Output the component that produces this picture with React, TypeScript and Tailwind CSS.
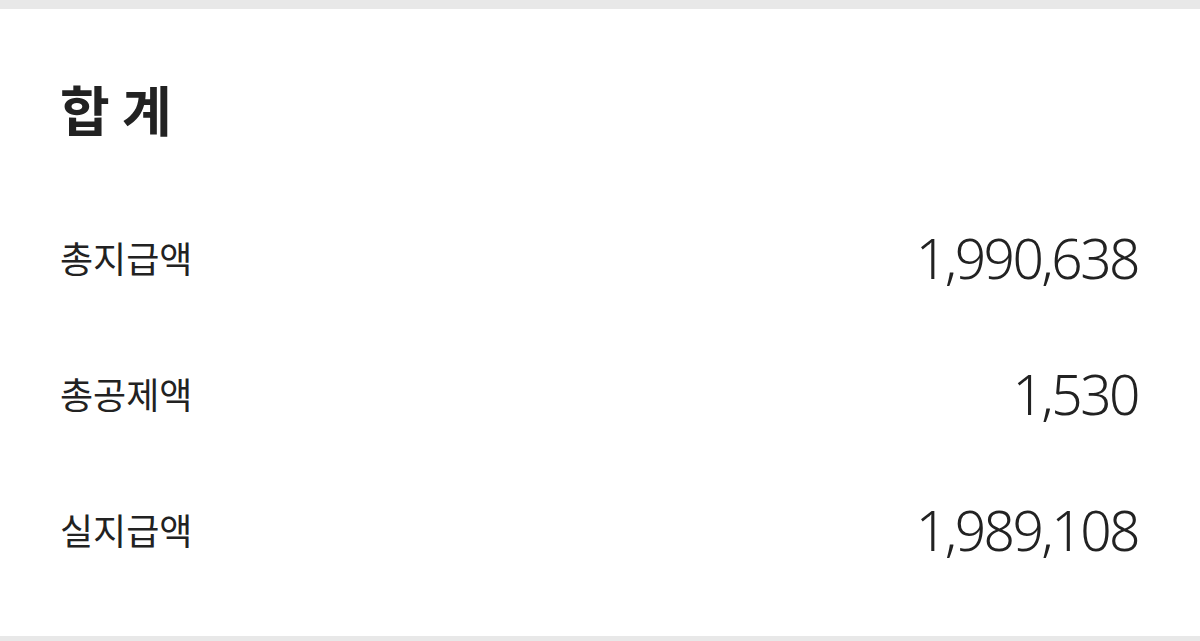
const rows = [
  { label: '총지급액', value: '1,990,638' },
  { label: '총공제액', value: '1,530' },
  { label: '실지급액', value: '1,989,108' },
];

export default function App() {
  return (
    <div
      className="flex h-[641px] w-[1200px] flex-col bg-[#e8e8e8] pt-[9px] pb-[5px] text-[#222222]"
      style={{ fontFamily: '"Noto Sans CJK KR", "Noto Sans", sans-serif' }}
    >
      <div className="flex flex-1 flex-col bg-white pt-[64px] pr-[62px] pl-[60px]">
        {/* Title */}
        <div className="flex h-[72px] items-center">
          <h1 className="text-[54px] leading-none font-bold">합 계</h1>
        </div>

        {/* Rows */}
        <div className="mt-[44px] flex flex-col">
          {rows.map((r) => (
            <div key={r.label} className="flex h-[136px] items-center justify-between">
              <span className="text-[36px] leading-none">{r.label}</span>
              <span
                className="text-[55px] leading-none font-[350] tracking-[-2.5px]"
                style={{ fontFamily: '"Noto Sans", "Open Sans", sans-serif' }}
              >
                {r.value}
              </span>
            </div>
          ))}
        </div>
      </div>
    </div>
  );
}
